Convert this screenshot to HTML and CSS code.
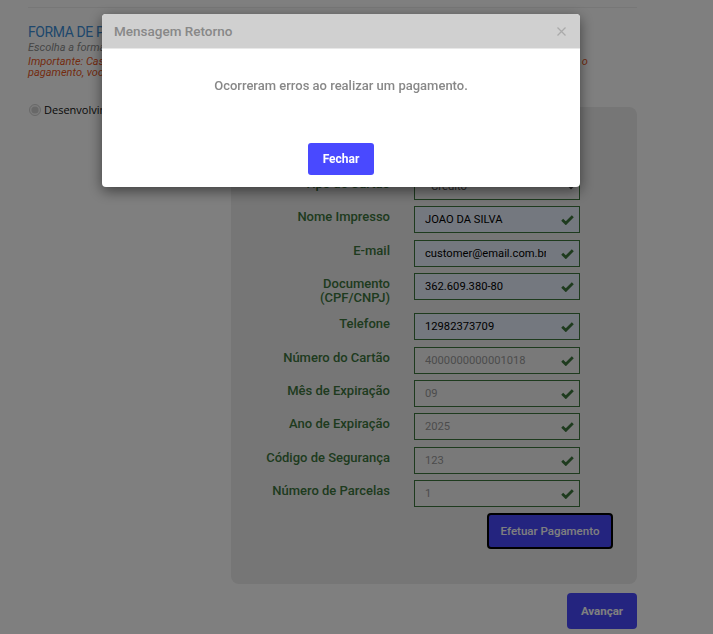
FILE: index.html
```html
<!DOCTYPE html>
<html lang="pt-BR">
<head>
  <meta charset="UTF-8">
  <meta name="viewport" content="width=device-width, initial-scale=1.0">
  <title>Pagamento</title>
  <link rel="stylesheet" href="styles.css">
</head>
<body>
  <div class="page">
    <div class="divider"></div>

    <h3 class="section-title">FORMA DE PAGAMENTO</h3>
    <p class="section-hint">Escolha a forma de pagamento desejada para concluir o seu pedido.</p>
    <p class="section-notice">Importante: Caso o pagamento seja recusado pela operadora, verifique os dados do cartão e tente novamente. Após o<br>pagamento, você receberá um e-mail com os detalhes do pedido.</p>

    <div class="content">
      <div class="options">
        <label class="option">
          <input type="radio" name="ambiente" checked disabled>
          <span>Desenvolvimento</span>
        </label>
      </div>

      <div class="payment-panel">
        <div class="form-row">
          <label class="form-label">Tipo de Cartão</label>
          <div class="field">
            <select class="form-input select-input" disabled>
              <option>Crédito</option>
            </select>
          </div>
        </div>

        <div class="form-row">
          <label class="form-label">Nome Impresso</label>
          <div class="field">
            <input class="form-input filled" type="text" value="JOAO DA SILVA" readonly>
            <svg class="check" width="13" height="10" viewBox="0 0 13 10"><polyline points="1.2,4.8 4.8,8.3 11.8,1.3" fill="none" stroke="#3c763d" stroke-width="2.8"/></svg>
          </div>
        </div>

        <div class="form-row">
          <label class="form-label">E-mail</label>
          <div class="field">
            <input class="form-input filled" type="text" value="customer@email.com.br" readonly>
            <svg class="check" width="13" height="10" viewBox="0 0 13 10"><polyline points="1.2,4.8 4.8,8.3 11.8,1.3" fill="none" stroke="#3c763d" stroke-width="2.8"/></svg>
          </div>
        </div>

        <div class="form-row">
          <label class="form-label">Documento<br>(CPF/CNPJ)</label>
          <div class="field">
            <input class="form-input filled" type="text" value="362.609.380-80" readonly>
            <svg class="check" width="13" height="10" viewBox="0 0 13 10"><polyline points="1.2,4.8 4.8,8.3 11.8,1.3" fill="none" stroke="#3c763d" stroke-width="2.8"/></svg>
          </div>
        </div>

        <div class="form-row">
          <label class="form-label">Telefone</label>
          <div class="field">
            <input class="form-input filled" type="text" value="12982373709" readonly>
            <svg class="check" width="13" height="10" viewBox="0 0 13 10"><polyline points="1.2,4.8 4.8,8.3 11.8,1.3" fill="none" stroke="#3c763d" stroke-width="2.8"/></svg>
          </div>
        </div>

        <div class="form-row">
          <label class="form-label">Número do Cartão</label>
          <div class="field">
            <input class="form-input" type="text" value="4000000000001018" readonly>
            <svg class="check" width="13" height="10" viewBox="0 0 13 10"><polyline points="1.2,4.8 4.8,8.3 11.8,1.3" fill="none" stroke="#3c763d" stroke-width="2.8"/></svg>
          </div>
        </div>

        <div class="form-row">
          <label class="form-label">Mês de Expiração</label>
          <div class="field">
            <input class="form-input" type="text" value="09" readonly>
            <svg class="check" width="13" height="10" viewBox="0 0 13 10"><polyline points="1.2,4.8 4.8,8.3 11.8,1.3" fill="none" stroke="#3c763d" stroke-width="2.8"/></svg>
          </div>
        </div>

        <div class="form-row">
          <label class="form-label">Ano de Expiração</label>
          <div class="field">
            <input class="form-input" type="text" value="2025" readonly>
            <svg class="check" width="13" height="10" viewBox="0 0 13 10"><polyline points="1.2,4.8 4.8,8.3 11.8,1.3" fill="none" stroke="#3c763d" stroke-width="2.8"/></svg>
          </div>
        </div>

        <div class="form-row">
          <label class="form-label">Código de Segurança</label>
          <div class="field">
            <input class="form-input" type="text" value="123" readonly>
            <svg class="check" width="13" height="10" viewBox="0 0 13 10"><polyline points="1.2,4.8 4.8,8.3 11.8,1.3" fill="none" stroke="#3c763d" stroke-width="2.8"/></svg>
          </div>
        </div>

        <div class="form-row">
          <label class="form-label">Número de Parcelas</label>
          <div class="field">
            <input class="form-input" type="text" value="1" readonly>
            <svg class="check" width="13" height="10" viewBox="0 0 13 10"><polyline points="1.2,4.8 4.8,8.3 11.8,1.3" fill="none" stroke="#3c763d" stroke-width="2.8"/></svg>
          </div>
        </div>

        <div class="panel-actions">
          <button class="btn btn-pay">Efetuar Pagamento</button>
        </div>
      </div>
    </div>

    <div class="page-actions">
      <button class="btn btn-next">Avançar</button>
    </div>
  </div>

  <div class="overlay"></div>

  <div class="modal">
    <div class="modal-header">
      <span class="modal-title">Mensagem Retorno</span>
      <svg class="modal-close" width="9" height="9" viewBox="0 0 9 9"><path d="M0.5 0.5 L8.5 8.5 M8.5 0.5 L0.5 8.5" stroke="#aaa" stroke-width="1.3"/></svg>
    </div>
    <div class="modal-body">
      <p class="modal-message">Ocorreram erros ao realizar um pagamento.</p>
      <button class="btn btn-close">Fechar</button>
    </div>
  </div>
</body>
</html>
```

FILE: styles.css
```css
body {
  margin: 0;
  font-family: Roboto, 'Liberation Sans', Arial, sans-serif;
  background-color: #fff;
  color: #333;
}
.page {
  width: 609px;
  margin-left: 28px;
  padding-top: 7px;
}
.divider {
  border-top: 1px solid #eee;
  margin-bottom: 16px;
}
.section-title {
  margin: 0;
  font-size: 14px;
  line-height: 16px;
  letter-spacing: -0.4px;
  font-weight: 400;
  color: #3d8fd9;
}
.section-hint {
  margin: 1px 0 2px;
  font-size: 11px;
  line-height: 13px;
  font-style: italic;
  color: #8c8c8c;
}
.section-notice {
  margin: 0;
  font-size: 11px;
  line-height: 11px;
  font-style: italic;
  color: #e8581e;
}
.content {
  display: flex;
  align-items: flex-start;
  margin-top: 24px;
}
.options {
  width: 203px;
}
.option {
  display: flex;
  align-items: center;
  font-family: 'Open Sans', 'DejaVu Sans', sans-serif;
  font-size: 11px;
  font-weight: 400;
  color: #111;
}
.option input {
  margin: 0 3px 0 1px;
  width: 12px;
  height: 12px;
}
.payment-panel {
  width: 406px;
  box-sizing: border-box;
  margin-top: 5px;
  padding: 66px 24px 35px 0;
  background-color: #ececec;
  border-radius: 8px;
}
.form-row {
  display: flex;
  align-items: flex-start;
  gap: 24px;
  padding-right: 33px;
  margin-bottom: 6.33px;
}
.form-label {
  flex: 0 0 159px;
  padding: 4px 0 2px;
  text-align: right;
  font-size: 13px;
  line-height: 14px;
  font-weight: 500;
  color: #3c763d;
}
.field {
  position: relative;
  width: 166px;
}
.form-input {
  display: block;
  width: 166px;
  height: 27px;
  box-sizing: border-box;
  margin: 0;
  padding: 0 33px 0 10px;
  border: 1px solid #3c763d;
  border-radius: 0;
  background-color: #f3f3f3;
  font-family: Roboto, 'Liberation Sans', sans-serif;
  font-size: 11.2px;
  color: #999;
  outline: none;
}
.form-input.filled {
  background-color: #e8f0fe;
  color: #000;
}
.select-input {
  padding-left: 12px;
  color: #555;
  opacity: 1;
}
.check {
  position: absolute;
  right: 6px;
  top: 9px;
}
.btn {
  border: none;
  border-radius: 4px;
  background-color: #4949ff;
  color: #fff;
  font-family: Roboto, 'Liberation Sans', sans-serif;
  font-size: 11.5px;
  cursor: pointer;
}
.panel-actions {
  display: flex;
  justify-content: flex-end;
}
.btn-pay {
  width: 126px;
  height: 36px;
  border: 2px solid #000;
  font-weight: 500;
}
.page-actions {
  display: flex;
  justify-content: flex-end;
  margin-top: 9px;
}
.btn-next {
  width: 70px;
  height: 36px;
  font-weight: 700;
}
.overlay {
  position: fixed;
  top: 0;
  left: 0;
  right: 0;
  bottom: 0;
  background-color: rgba(0, 0, 0, 0.5);
}
.modal {
  position: fixed;
  top: 14px;
  left: 102px;
  width: 478px;
  background-color: #fff;
  border-radius: 4px;
  overflow: hidden;
  box-shadow: 0 4px 14px rgba(0, 0, 0, 0.5);
}
.modal-header {
  display: flex;
  justify-content: space-between;
  align-items: center;
  height: 34px;
  padding: 0 14px 0 12px;
  background-color: #d0d0d0;
  border-bottom: 1px solid #e8e8e8;
}
.modal-title {
  font-size: 13.5px;
  font-weight: 500;
  color: #888;
}
.modal-body {
  display: flex;
  flex-direction: column;
  align-items: center;
  padding: 29px 0 12px;
}
.modal-message {
  margin: 0 0 49px;
  font-size: 13px;
  line-height: 16px;
  font-weight: 500;
  color: #888;
}
.btn-close {
  width: 66px;
  height: 32px;
  border-radius: 3px;
  font-size: 12px;
  font-weight: 700;
}
```
